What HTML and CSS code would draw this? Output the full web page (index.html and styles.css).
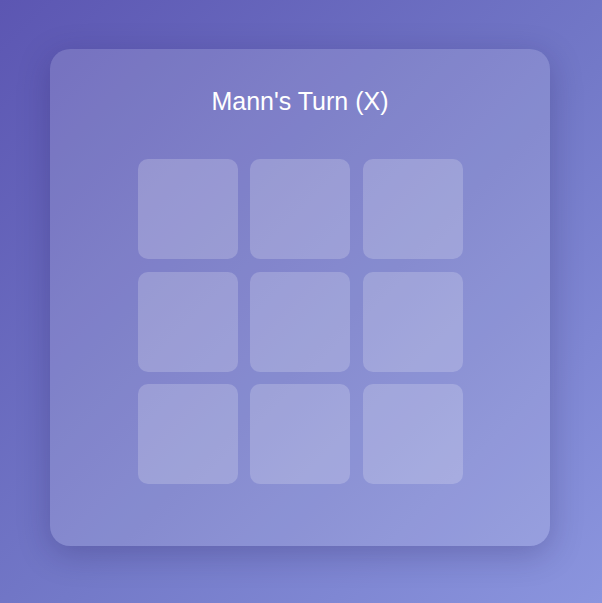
FILE: index.html
```html
<!DOCTYPE html>
<html>
<head>
<meta charset="utf-8">
<link rel="stylesheet" href="styles.css">
</head>
<body>
<div class="card">
  <h1 class="status">Mann's Turn (X)</h1>
  <div class="board">
    <div class="cell"></div>
    <div class="cell"></div>
    <div class="cell"></div>
    <div class="cell"></div>
    <div class="cell"></div>
    <div class="cell"></div>
    <div class="cell"></div>
    <div class="cell"></div>
    <div class="cell"></div>
  </div>
</div>
</body>
</html>
```
FILE: styles.css
```css
html, body {
  margin: 0;
  padding: 0;
}
body {
  min-height: 603px;
  box-sizing: border-box;
  padding: 49px 0 0 50px;
  display: flex;
  justify-content: flex-start;
  align-items: flex-start;
  background: linear-gradient(135deg, #5c56b2 0%, #7379c8 55%, #8b95de 100%);
  font-family: "Liberation Sans", Arial, sans-serif;
}
.card {
  width: 500px;
  height: 497px;
  box-sizing: border-box;
  padding: 36px 0 0;
  border-radius: 20px;
  background: rgba(255, 255, 255, 0.14);
  box-shadow: 0 8px 32px rgba(30, 20, 80, 0.25);
  display: flex;
  flex-direction: column;
  align-items: center;
}
.status {
  margin: 0;
  font-size: 25px;
  font-weight: normal;
  line-height: 32px;
  color: #ffffff;
}
.board {
  margin-top: 42px;
  display: grid;
  grid-template-columns: repeat(3, 100px);
  grid-auto-rows: 100px;
  gap: 12.5px;
}
.cell {
  border-radius: 10px;
  background: rgba(255, 255, 255, 0.2);
}
```
